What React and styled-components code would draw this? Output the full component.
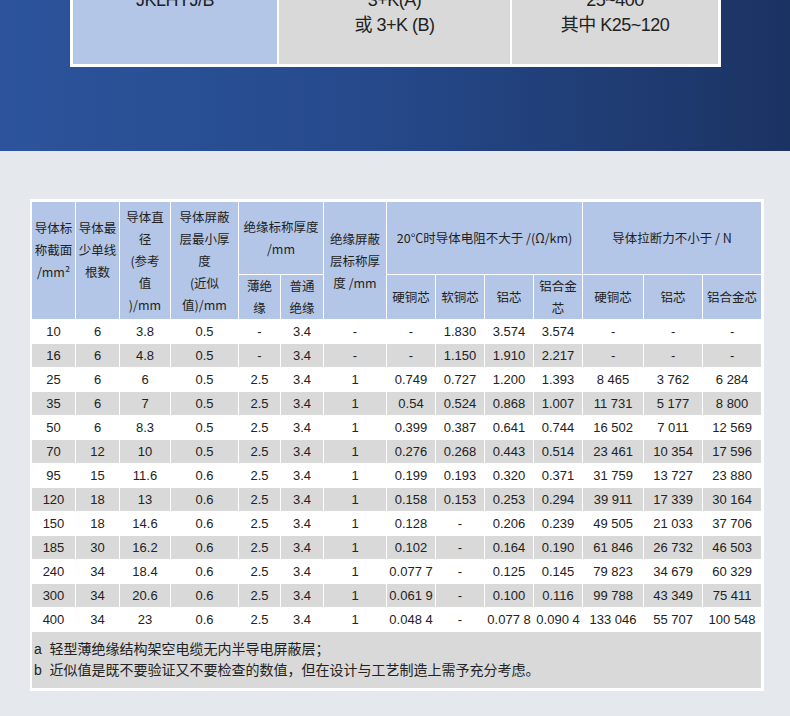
import React from "react";
import styled, { createGlobalStyle } from "styled-components";

const Global = createGlobalStyle`
  body { margin: 0; font-family: "Liberation Sans", Arial, "Noto Sans CJK SC", sans-serif; }
`;
const Page = styled.div`width: 790px; height: 716px; overflow: hidden; background: #e5e9ed;`;
const Hero = styled.div`
  height: 151px; overflow: hidden;
  background: linear-gradient(90deg, #2c549c 0%, #264a8c 45%, #1b3363 100%);
  padding: 0 69px 0 70px;
`;
const TopTable = styled.table`
  margin-top: -14px; width: 651px; border-collapse: collapse; background: #fff;
  border: 3px solid #fff; border-top: none;
  td { border: 2px solid #fff; height: 76px; vertical-align: top; text-align: center;
       font-size: 18px; line-height: 25px; color: #222; padding: 0; letter-spacing: -0.5px; }
`;
const TopCell = styled.td`background: ${p => p.$blue ? "#b4c6e7" : "#d9d9d9"}; width: ${p => p.$w}px;`;
const Body = styled.div`padding: 48px 28px 0 30px;`;
const Wrap = styled.div`background: #fff; padding: 2px 2px 2px 1px; width: 731px;`;
const Table = styled.table`
  border-collapse: collapse; width: 729px; table-layout: fixed;
  td, th { border: 1px solid #fff; padding: 0; text-align: center; color: #222; font-size: 13px; }
`;
const H = styled.th`background: #b4c6e7; font-weight: normal; line-height: 22px; font-family: "Noto Sans CJK SC", "Liberation Sans", sans-serif; font-size: 12.5px !important;`;
const Row = styled.tr`background: ${p => p.$alt ? "#d9d9d9" : "#fff"}; td { height: 23px; }`;
const Note = styled.td`
  background: #d9d9d9; text-align: left !important; height: 56px; font-size: 14px !important;
  line-height: 21px; padding-left: 2px !important; font-family: "Liberation Sans", "Noto Sans CJK SC", sans-serif;
`;

const widths = [44, 44, 51, 68, 42, 43, 63, 49, 49, 49, 49, 61, 59, 59];
const rows = [
  ["10","6","3.8","0.5","-","3.4","-","-","1.830","3.574","3.574","-","-","-"],
  ["16","6","4.8","0.5","-","3.4","-","-","1.150","1.910","2.217","-","-","-"],
  ["25","6","6","0.5","2.5","3.4","1","0.749","0.727","1.200","1.393","8 465","3 762","6 284"],
  ["35","6","7","0.5","2.5","3.4","1","0.54","0.524","0.868","1.007","11 731","5 177","8 800"],
  ["50","6","8.3","0.5","2.5","3.4","1","0.399","0.387","0.641","0.744","16 502","7 011","12 569"],
  ["70","12","10","0.5","2.5","3.4","1","0.276","0.268","0.443","0.514","23 461","10 354","17 596"],
  ["95","15","11.6","0.6","2.5","3.4","1","0.199","0.193","0.320","0.371","31 759","13 727","23 880"],
  ["120","18","13","0.6","2.5","3.4","1","0.158","0.153","0.253","0.294","39 911","17 339","30 164"],
  ["150","18","14.6","0.6","2.5","3.4","1","0.128","-","0.206","0.239","49 505","21 033","37 706"],
  ["185","30","16.2","0.6","2.5","3.4","1","0.102","-","0.164","0.190","61 846","26 732","46 503"],
  ["240","34","18.4","0.6","2.5","3.4","1","0.077 7","-","0.125","0.145","79 823","34 679","60 329"],
  ["300","34","20.6","0.6","2.5","3.4","1","0.061 9","-","0.100","0.116","99 788","43 349","75 411"],
  ["400","34","23","0.6","2.5","3.4","1","0.048 4","-","0.077 8","0.090 4","133 046","55 707","100 548"],
];

export default function App() {
  return (
    <Page>
      <Global />
      <Hero>
        <TopTable>
          <tbody>
            <tr>
              <TopCell $blue $w={205}>JKLHYJ/B</TopCell>
              <TopCell $w={233}>3+K(A)<br />或 3+K (B)</TopCell>
              <TopCell $w={207}>25~400<br />其中 K25~120</TopCell>
            </tr>
          </tbody>
        </TopTable>
      </Hero>
      <Body>
        <Wrap>
          <Table>
            <colgroup>{widths.map((w, i) => <col key={i} style={{ width: w }} />)}</colgroup>
            <thead>
              <tr style={{ height: 73 }}>
                <H rowSpan={2}>导体标<br />称截面<br />/mm²<br /><br /></H>
                <H rowSpan={2}>导体最<br />少单线<br />根数<br /><br /></H>
                <H rowSpan={2}>导体直<br />径<br />(参考<br />值<br />)/mm</H>
                <H rowSpan={2}>导体屏蔽<br />层最小厚<br />度<br />(近似<br />值)/mm</H>
                <H colSpan={2}>绝缘标称厚度<br />/mm</H>
                <H rowSpan={2}>绝缘屏蔽<br />层标称厚<br />度 /mm</H>
                <H colSpan={4}>20°C时导体电阻不大于 /(Ω/km)</H>
                <H colSpan={3}>导体拉断力不小于 / N</H>
              </tr>
              <tr style={{ height: 44 }}>
                <H>薄绝<br />缘</H><H>普通<br />绝缘</H>
                <H>硬铜芯</H><H>软铜芯</H><H>铝芯</H><H>铝合金<br />芯</H>
                <H>硬铜芯</H><H>铝芯</H><H>铝合金芯</H>
              </tr>
            </thead>
            <tbody>
              {rows.map((r, i) => (
                <Row key={i} $alt={i % 2 === 1}>
                  {r.map((c, j) => <td key={j}>{c}</td>)}
                </Row>
              ))}
              <tr>
                <Note colSpan={14}>a&nbsp; 轻型薄绝缘结构架空电缆无内半导电屏蔽层；<br />b&nbsp; 近似值是既不要验证又不要检查的数值，但在设计与工艺制造上需予充分考虑。</Note>
              </tr>
            </tbody>
          </Table>
        </Wrap>
      </Body>
    </Page>
  );
}
